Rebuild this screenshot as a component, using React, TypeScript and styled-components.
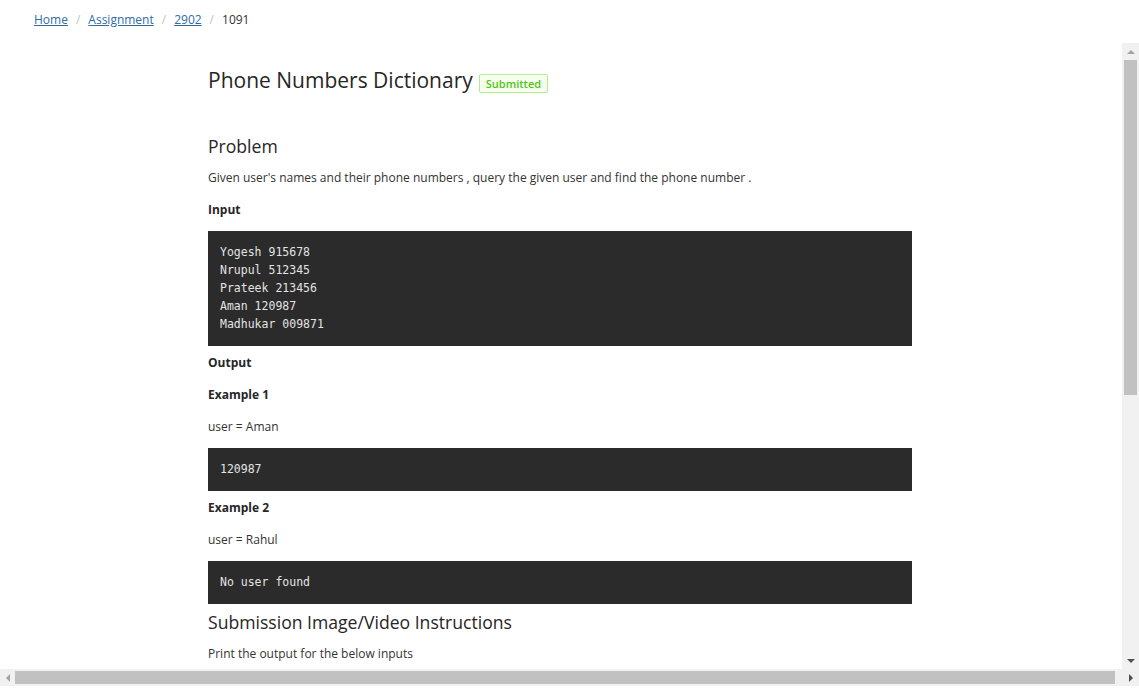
import styled, { createGlobalStyle } from 'styled-components';

const GlobalStyle = createGlobalStyle`
  html, body {
    margin: 0;
    padding: 0;
    background: #fff;
    overflow: hidden;
  }
  body {
    font-family: 'Open Sans', 'Noto Sans', sans-serif;
    color: #262626;
  }
`;

const Breadcrumb = styled.nav`
  display: flex;
  align-items: center;
  height: 43px;
  padding: 0 0 4px 34px;
  box-sizing: border-box;
  font-size: 12px;
`;

const Crumb = styled.a`
  color: #2e6da4;
  text-decoration: underline;
`;

const Current = styled.span`
  color: #333;
`;

const Sep = styled.span`
  color: #bfbfbf;
  margin: 0 8px;
`;

/* scroll frame drawn as plain boxes: the page is photographed without native bars */
const Frame = styled.div`
  display: flex;
  flex-direction: column;
  height: 643px;
`;

const Viewport = styled.div`
  flex: 1;
  display: flex;
  min-height: 0;
`;

const Content = styled.div`
  flex: 1;
  overflow: hidden;
  padding-right: 2px;
`;

const VBar = styled.div`
  flex: 0 0 17px;
  display: flex;
  flex-direction: column;
  background: #f1f1f1;
`;

const HBar = styled.div`
  flex: 0 0 17px;
  display: flex;
  align-items: center;
  background: #f1f1f1;
`;

const BarButton = styled.div<{ $size?: number }>`
  flex: 0 0 ${(p) => p.$size ?? 17}px;
  height: 17px;
  display: flex;
  align-items: center;
  justify-content: center;
`;

const VThumb = styled.div`
  height: 335px;
  margin: 0 2px;
  background: #c1c1c1;
`;

const HThumb = styled.div`
  width: 1100px;
  height: 13px;
  background: #c1c1c1;
`;

const Track = styled.div`
  flex: 1;
`;

type Dir = 'up' | 'down' | 'left' | 'right';

const Arrow = styled.span<{ $dir: Dir; $dark?: boolean }>`
  width: 0;
  height: 0;
  ${(p) => {
    const c = p.$dark ? '#505050' : '#a3a3a3';
    switch (p.$dir) {
      case 'up':
        return `border-left: 4px solid transparent; border-right: 4px solid transparent; border-bottom: 4px solid ${c};`;
      case 'down':
        return `border-left: 4px solid transparent; border-right: 4px solid transparent; border-top: 4px solid ${c};`;
      case 'left':
        return `border-top: 4px solid transparent; border-bottom: 4px solid transparent; border-right: 4px solid ${c};`;
      default:
        return `border-top: 4px solid transparent; border-bottom: 4px solid transparent; border-left: 4px solid ${c};`;
    }
  }}
`;

const Article = styled.article`
  max-width: 704px;
  margin: 0 auto;
  padding-top: 22px;
`;

const TitleRow = styled.div`
  display: flex;
  align-items: baseline;
  gap: 6px;
  margin-bottom: 39px;
`;

const Title = styled.h1`
  margin: 0;
  font-size: 21px;
  line-height: 30px;
  font-weight: 400;
  color: #262626;
`;

const Tag = styled.span`
  display: inline-block;
  padding: 0 6px;
  font-size: 11px;
  line-height: 17px;
  font-weight: 600;
  color: #52c41a;
  background: #f6ffed;
  border: 1px solid #b7eb8f;
  border-radius: 2px;
`;

const Heading = styled.h2`
  margin: 0 0 8px;
  font-size: 17.6px;
  line-height: 25px;
  font-weight: 400;
  color: #262626;
`;

const Text = styled.p<{ $bold?: boolean }>`
  margin: 0 0 11px;
  font-size: 12px;
  line-height: 21px;
  font-weight: ${(p) => (p.$bold ? 700 : 400)};
  color: ${(p) => (p.$bold ? '#262626' : '#333')};
`;

const Code = styled.pre`
  margin: 0 0 6px;
  padding: 12px 12px 13px;
  background: #2b2b2b;
  color: #e3e3e3;
  font-family: 'DejaVu Sans Mono', 'Liberation Mono', monospace;
  font-size: 11.5px;
  line-height: 18px;
  white-space: pre;
`;

export default function App() {
  return (
    <>
      <GlobalStyle />
      <Breadcrumb>
        <Crumb href="#">Home</Crumb>
        <Sep>/</Sep>
        <Crumb href="#">Assignment</Crumb>
        <Sep>/</Sep>
        <Crumb href="#">2902</Crumb>
        <Sep>/</Sep>
        <Current>1091</Current>
      </Breadcrumb>
      <Frame>
        <Viewport>
          <Content>
            <Article>
              <TitleRow>
                <Title>Phone Numbers Dictionary</Title>
                <Tag>Submitted</Tag>
              </TitleRow>
              <Heading>Problem</Heading>
              <Text>
                Given user's names and their phone numbers , query the given user and find the phone number .
              </Text>
              <Text $bold>Input</Text>
              <Code>{`Yogesh 915678
Nrupul 512345
Prateek 213456
Aman 120987
Madhukar 009871`}</Code>
              <Text $bold>Output</Text>
              <Text $bold>Example 1</Text>
              <Text>user = Aman</Text>
              <Code>120987</Code>
              <Text $bold>Example 2</Text>
              <Text>user = Rahul</Text>
              <Code>No user found</Code>
              <Heading>Submission Image/Video Instructions</Heading>
              <Text>Print the output for the below inputs</Text>
            </Article>
          </Content>
          <VBar>
            <BarButton>
              <Arrow $dir="up" />
            </BarButton>
            <VThumb />
            <Track />
            <BarButton>
              <Arrow $dir="down" $dark />
            </BarButton>
          </VBar>
        </Viewport>
        <HBar>
          <BarButton $size={15}>
            <Arrow $dir="left" />
          </BarButton>
          <HThumb />
          <Track />
          <BarButton>
            <Arrow $dir="right" $dark />
          </BarButton>
        </HBar>
      </Frame>
    </>
  );
}
